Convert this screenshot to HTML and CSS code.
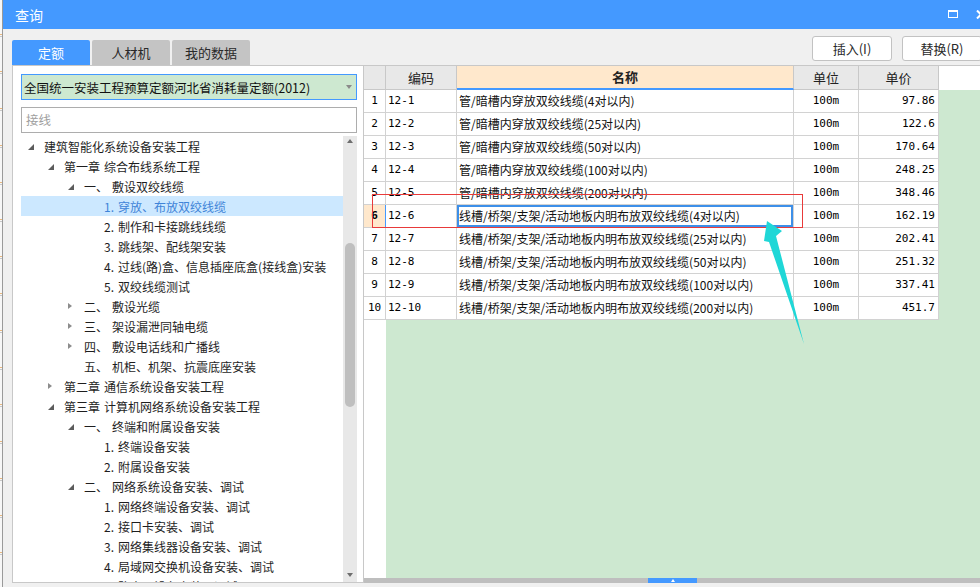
FILE: index.html
```html
<!DOCTYPE html>
<html lang="zh-CN">
<head>
<meta charset="utf-8">
<title>查询</title>
<link rel="stylesheet" href="styles.css">
</head>
<body>
<div class="screen">
  <div class="bgapp"></div>
  <div class="dialog">
    <div class="titlebar">
      <span class="title">查询</span>
      <div class="winbtns">
        <svg class="ico-restore" width="10" height="8" viewBox="0 0 10 8"><rect x="0.5" y="0.5" width="9" height="7" fill="none" stroke="#fff" stroke-width="1"/><rect x="0" y="0" width="10" height="2" fill="#fff"/></svg>
        <svg class="ico-close" width="10" height="9" viewBox="0 0 10 9"><path d="M1 0.5 L9 8.5 M9 0.5 L1 8.5" stroke="#fff" stroke-width="2"/></svg>
      </div>
    </div>
    <div class="toolbar">
      <div class="tabs">
        <div class="tab active">定额</div>
        <div class="tab">人材机</div>
        <div class="tab">我的数据</div>
      </div>
      <div class="actions">
        <div class="btn">插入(I)</div>
        <div class="btn">替换(R)</div>
      </div>
    </div>
    <div class="main">
      <div class="left">
        <div class="select"><span class="select-text">全国统一安装工程预算定额河北省消耗量定额(2012)</span><span class="caret"></span></div>
        <div class="search">接线</div>
        <div class="treewrap">
          <div class="tree">
            <div class="row l0"><span class="tw open"></span><span>建筑智能化系统设备安装工程</span></div>
            <div class="row l1"><span class="tw open"></span><span class="n">第一章</span><span>综合布线系统工程</span></div>
            <div class="row l2"><span class="tw open"></span><span class="n">一、</span><span>敷设双绞线缆</span></div>
            <div class="row l3 sel"><span class="n">1.</span><span>穿放、布放双绞线缆</span></div>
            <div class="row l3"><span class="n">2.</span><span>制作和卡接跳线线缆</span></div>
            <div class="row l3"><span class="n">3.</span><span>跳线架、配线架安装</span></div>
            <div class="row l3"><span class="n">4.</span><span>过线(路)盒、信息插座底盒(接线盒)安装</span></div>
            <div class="row l3"><span class="n">5.</span><span>双绞线缆测试</span></div>
            <div class="row l2"><span class="tw closed"></span><span class="n">二、</span><span>敷设光缆</span></div>
            <div class="row l2"><span class="tw closed"></span><span class="n">三、</span><span>架设漏泄同轴电缆</span></div>
            <div class="row l2"><span class="tw closed"></span><span class="n">四、</span><span>敷设电话线和广播线</span></div>
            <div class="row l2"><span class="tw"></span><span class="n">五、</span><span>机柜、机架、抗震底座安装</span></div>
            <div class="row l1"><span class="tw closed"></span><span class="n">第二章</span><span>通信系统设备安装工程</span></div>
            <div class="row l1"><span class="tw open"></span><span class="n">第三章</span><span>计算机网络系统设备安装工程</span></div>
            <div class="row l2"><span class="tw open"></span><span class="n">一、</span><span>终端和附属设备安装</span></div>
            <div class="row l3"><span class="n">1.</span><span>终端设备安装</span></div>
            <div class="row l3"><span class="n">2.</span><span>附属设备安装</span></div>
            <div class="row l2"><span class="tw open"></span><span class="n">二、</span><span>网络系统设备安装、调试</span></div>
            <div class="row l3"><span class="n">1.</span><span>网络终端设备安装、调试</span></div>
            <div class="row l3"><span class="n">2.</span><span>接口卡安装、调试</span></div>
            <div class="row l3"><span class="n">3.</span><span>网络集线器设备安装、调试</span></div>
            <div class="row l3"><span class="n">4.</span><span>局域网交换机设备安装、调试</span></div>
            <div class="row l3"><span class="n">5.</span><span>路由器设备安装、调试</span></div>
          </div>
          <div class="vscroll">
            <span class="arr up"></span>
            <div class="vtrack"><div class="vthumb"></div></div>
            <span class="arr down"></span>
          </div>
        </div>
      </div>
      <div class="grid">
        <div class="ghead">
          <div class="hc c-no"></div>
          <div class="hc c-code">编码</div>
          <div class="hc c-name focus">名称</div>
          <div class="hc c-unit">单位</div>
          <div class="hc c-price">单价</div>
        </div>
        <div class="gbody">
          <div class="grow"><div class="gc c-no">1</div><div class="gc c-code">12-1</div><div class="gc c-name">管/暗槽内穿放双绞线缆(4对以内)</div><div class="gc c-unit">100m</div><div class="gc c-price">97.86</div></div>
          <div class="grow"><div class="gc c-no">2</div><div class="gc c-code">12-2</div><div class="gc c-name">管/暗槽内穿放双绞线缆(25对以内)</div><div class="gc c-unit">100m</div><div class="gc c-price">122.6</div></div>
          <div class="grow"><div class="gc c-no">3</div><div class="gc c-code">12-3</div><div class="gc c-name">管/暗槽内穿放双绞线缆(50对以内)</div><div class="gc c-unit">100m</div><div class="gc c-price">170.64</div></div>
          <div class="grow"><div class="gc c-no">4</div><div class="gc c-code">12-4</div><div class="gc c-name">管/暗槽内穿放双绞线缆(100对以内)</div><div class="gc c-unit">100m</div><div class="gc c-price">248.25</div></div>
          <div class="grow"><div class="gc c-no">5</div><div class="gc c-code">12-5</div><div class="gc c-name">管/暗槽内穿放双绞线缆(200对以内)</div><div class="gc c-unit">100m</div><div class="gc c-price">348.46</div></div>
          <div class="grow cur"><div class="gc c-no">6</div><div class="gc c-code">12-6</div><div class="gc c-name">线槽/桥架/支架/活动地板内明布放双绞线缆(4对以内)</div><div class="gc c-unit">100m</div><div class="gc c-price">162.19</div></div>
          <div class="grow"><div class="gc c-no">7</div><div class="gc c-code">12-7</div><div class="gc c-name">线槽/桥架/支架/活动地板内明布放双绞线缆(25对以内)</div><div class="gc c-unit">100m</div><div class="gc c-price">202.41</div></div>
          <div class="grow"><div class="gc c-no">8</div><div class="gc c-code">12-8</div><div class="gc c-name">线槽/桥架/支架/活动地板内明布放双绞线缆(50对以内)</div><div class="gc c-unit">100m</div><div class="gc c-price">251.32</div></div>
          <div class="grow"><div class="gc c-no">9</div><div class="gc c-code">12-9</div><div class="gc c-name">线槽/桥架/支架/活动地板内明布放双绞线缆(100对以内)</div><div class="gc c-unit">100m</div><div class="gc c-price">337.41</div></div>
          <div class="grow"><div class="gc c-no">10</div><div class="gc c-code">12-10</div><div class="gc c-name">线槽/桥架/支架/活动地板内明布放双绞线缆(200对以内)</div><div class="gc c-unit">100m</div><div class="gc c-price">451.7</div></div>
        </div>
        <div class="hscroll"><div class="hthumb"><span class="hup"></span></div></div>
      </div>
    </div>
  </div>
  <div class="annot-rect"></div>
  <svg class="annot-arrow" width="60" height="130" viewBox="760 218 60 130">
    <polygon points="767,221 782,231 776,236 804,344 769,242 764,241" fill="#1fd7d7"/>
  </svg>
</div>
</body>
</html>
```

FILE: styles.css
```css
* { box-sizing: border-box; }
html, body { margin: 0; padding: 0; }
body {
  background: #f0f0f0;
  font-family: "Noto Sans CJK SC", "Microsoft YaHei", sans-serif;
  font-size: 12px;
  color: #1e1e1e;
}
.screen {
  position: relative;
  width: 980px;
  height: 587px;
  display: flex;
  overflow: hidden;
}
.bgapp {
  width: 3px;
  flex: 0 0 3px;
  background: repeating-linear-gradient(to bottom, #f7f7f7 0 34px, #e8b880 34px 35px, #f7f7f7 35px 36px, #c8c8c8 36px 37px);
  border-right: 1px solid #9a9a9a;
}
.dialog {
  flex: 1;
  display: flex;
  flex-direction: column;
  background: #f0f0f0;
  overflow: hidden;
}
.titlebar {
  height: 29px;
  flex: 0 0 29px;
  background: #4499ff;
  display: flex;
  align-items: center;
  padding-left: 12px;
}
.title { color: #fff; font-size: 14px; line-height: 1; }
.winbtns {
  margin-left: auto;
  margin-right: -6px;
  display: flex;
  align-items: center;
  gap: 18px;
}
.ico-restore { margin-top: -1px; }
.toolbar {
  height: 36px;
  flex: 0 0 36px;
  display: flex;
  padding-left: 9px;
}
.tabs {
  display: flex;
  align-items: flex-end;
  gap: 2px;
}
.tab {
  width: 78px;
  height: 25px;
  line-height: 25px;
  text-align: center;
  font-size: 13px;
  background: #c4c4c4;
  color: #2a2a2a;
  border-radius: 2px 2px 0 0;
}
.tab.active { background: #4499ff; color: #fff; }
.actions {
  margin-left: auto;
  margin-right: -2px;
  padding-top: 7px;
  display: flex;
  gap: 10px;
}
.btn {
  width: 80px;
  height: 25px;
  line-height: 23px;
  text-align: center;
  font-size: 13px;
  background: #fff;
  border: 1px solid #c2c2c2;
  border-radius: 3px;
  color: #2a2a2a;
}
.main {
  height: 518px;
  flex: 0 0 518px;
  display: flex;
  padding-left: 9px;
}
.left {
  width: 351px;
  flex: 0 0 351px;
  background: #fff;
  border: 1px solid #c8c8c8;
  border-right: 0;
  padding: 8px 6px 0 8px;
  display: flex;
  flex-direction: column;
}
.select {
  height: 26px;
  flex: 0 0 26px;
  background: #cde8d0;
  border: 1px solid #4499ff;
  display: flex;
  align-items: center;
  padding-left: 2px;
  font-size: 12.5px;
  color: #111;
}
.caret {
  margin-left: auto;
  margin-right: 4px;
  width: 0; height: 0;
  border-left: 3.5px solid transparent;
  border-right: 3.5px solid transparent;
  border-top: 4px solid #8a8a8a;
}
.search {
  margin-top: 7px;
  height: 26px;
  flex: 0 0 26px;
  border: 1px solid #adadad;
  line-height: 24px;
  padding-left: 4px;
  color: #a0a0a0;
  font-size: 12.5px;
}
.treewrap {
  margin-top: 3px;
  height: 446px;
  flex: 0 0 446px;
  display: flex;
  overflow: hidden;
}
.tree { flex: 1; overflow: hidden; }
.row {
  height: 20px;
  display: flex;
  align-items: center;
  white-space: nowrap;
  color: #1e1e1e;
}
.row.l0 { padding-left: 7px; }
.row.l1 { padding-left: 27px; }
.row.l2 { padding-left: 47px; }
.row.l3 { padding-left: 83px; }
.row.sel { background: #cce8ff; color: #3f84d8; }
.tw { width: 16px; flex: 0 0 16px; display: flex; align-items: center; height: 20px; }
.tw.open::before {
  content: "";
  width: 0; height: 0;
  border-left: 6px solid transparent;
  border-bottom: 6px solid #5c5c5c;
  margin-top: 1px;
}
.tw.closed::before {
  content: "";
  width: 0; height: 0;
  border-left: 4px solid #8c8c8c;
  border-top: 3.5px solid transparent;
  border-bottom: 3.5px solid transparent;
}
.n { margin-right: 4px; }
.vscroll {
  width: 14px;
  flex: 0 0 14px;
  background: #e8e8e8;
  display: flex;
  flex-direction: column;
  align-items: center;
}
.arr { width: 0; height: 0; border-left: 3.5px solid transparent; border-right: 3.5px solid transparent; }
.arr.up { border-bottom: 4px solid #6e6e6e; margin-top: 3px; }
.arr.down { border-top: 4px solid #6e6e6e; margin-bottom: 5px; }
.vtrack { flex: 1; width: 10px; padding-top: 100px; }
.vthumb { width: 10px; height: 164px; background: #bfbfbf; border-radius: 5px; }
.grid {
  flex: 1;
  display: flex;
  flex-direction: column;
  border-left: 1px solid #c8c8c8;
  border-top: 1px solid #c8c8c8;
  background: #fff;
  font-family: "DejaVu Sans Mono", "Noto Sans CJK SC", monospace;
  font-size: 11px;
  color: #000;
}
.ghead {
  height: 24px;
  flex: 0 0 24px;
  display: flex;
  background: #fff;
}
.hc {
  height: 24px;
  background: #e8e8e8;
  border-right: 1px solid #c8c8c8;
  border-bottom: 1px solid #c8c8c8;
  text-align: center;
  line-height: 23px;
  font-family: "Noto Sans CJK SC", sans-serif;
  font-size: 13px;
  color: #222;
}
.hc.focus {
  background: #ffe8cc;
  border-bottom: 2px solid #4499ff;
  font-weight: bold;
  line-height: 22px;
}
.c-no { width: 22px; flex: 0 0 22px; }
.c-code { width: 71px; flex: 0 0 71px; }
.c-name { width: 337px; flex: 0 0 337px; }
.c-unit { width: 65px; flex: 0 0 65px; }
.c-price { width: 80px; flex: 0 0 80px; }
.gbody {
  flex: 1;
  background: linear-gradient(to right, #fff 0 22px, #cde8d0 22px);
  overflow: hidden;
}
.grow {
  display: flex;
  height: 23px;
  width: 575px;
  background: #fff;
}
.gc {
  height: 23px;
  line-height: 22px;
  border-right: 1px solid #d2d2d2;
  border-bottom: 1px solid #d2d2d2;
  white-space: nowrap;
  overflow: hidden;
}
.gc.c-no { text-align: center; }
.gc.c-code { padding-left: 2px; }
.gc.c-name { padding-left: 2px; font-family: "Noto Sans CJK SC", sans-serif; font-size: 12px; color: #111; }
.gc.c-unit { text-align: center; }
.gc.c-price { text-align: right; padding-right: 3px; }
.grow.cur .c-no { background: #ffe8cc; font-weight: bold; border-right: 1px solid #4499ff; }
.grow.cur .c-name { box-shadow: inset 0 0 0 2px #3d8fe8; }
.hscroll {
  height: 5px;
  flex: 0 0 5px;
  background: #bebebe;
  position: relative;
}
.hthumb {
  position: absolute;
  left: 284px;
  top: 0;
  width: 49px;
  height: 5px;
  background: #4499ff;
  display: flex;
  justify-content: center;
  align-items: center;
}
.hup { width: 0; height: 0; border-left: 2.5px solid transparent; border-right: 2.5px solid transparent; border-bottom: 3px solid #fff; }
.annot-rect {
  position: absolute;
  left: 372px;
  top: 194px;
  width: 431px;
  height: 34px;
  border: 1px solid #e83a3a;
  pointer-events: none;
}
.annot-arrow {
  position: absolute;
  left: 760px;
  top: 218px;
}
```
